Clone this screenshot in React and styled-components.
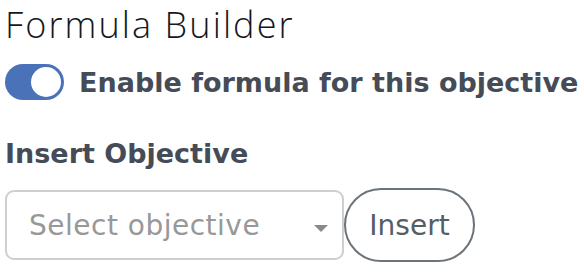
import React, { useState } from "react";
import styled, { createGlobalStyle } from "styled-components";

const GlobalStyle = createGlobalStyle`
  body {
    margin: 0;
    background: #fff;
    font-family: "DejaVu Sans", "Noto Sans", sans-serif;
  }
`;

const Panel = styled.div`
  padding: 0 5px;
  display: flex;
  flex-direction: column;
`;

const Title = styled.h2`
  margin: 0;
  font-family: "Open Sans", sans-serif;
  font-size: 36px;
  font-weight: 300;
  letter-spacing: 2.1px;
  color: #14171c;
  line-height: 49px;
  white-space: nowrap;
`;

const ToggleRow = styled.label`
  display: flex;
  align-items: center;
  gap: 15px;
  margin-top: 15px;
  cursor: pointer;
`;

const Track = styled.span`
  position: relative;
  width: 59px;
  height: 36px;
  border-radius: 18px;
  background: ${(p) => (p.$on ? "#4a72b9" : "#c4c8cf")};
  flex-shrink: 0;
`;

const Knob = styled.span`
  position: absolute;
  top: 3px;
  left: ${(p) => (p.$on ? "26px" : "3px")};
  width: 30px;
  height: 30px;
  border-radius: 50%;
  background: #fff;
`;

const ToggleText = styled.span`
  font-size: 27px;
  font-weight: 700;
  color: #454c57;
`;

const SectionLabel = styled.div`
  margin-top: 38px;
  font-size: 27px;
  font-weight: 700;
  color: #454c57;
`;

const Controls = styled.div`
  display: flex;
  align-items: center;
  margin-top: 19px;
`;

const SelectBox = styled.div`
  position: relative;
  box-sizing: border-box;
  width: 339px;
  height: 70px;
  border: 2px solid #cfcfcf;
  border-radius: 9px;
  display: flex;
  align-items: center;
  padding-left: 22px;
  font-size: 28px;
  letter-spacing: 0.5px;
  color: #989898;
`;

const Caret = styled.span`
  position: absolute;
  right: 14px;
  top: 33px;
  width: 0;
  height: 0;
  border-left: 7px solid transparent;
  border-right: 7px solid transparent;
  border-top: 7px solid #8a8a8a;
`;

const PillButton = styled.button`
  box-sizing: border-box;
  height: 74px;
  width: 131px;
  border: 2px solid #6b737b;
  border-radius: 37px;
  background: #fff;
  font-family: inherit;
  font-size: 28px;
  color: #555e67;
  cursor: pointer;
`;

export default function App() {
  const [on, setOn] = useState(true);
  return (
    <>
      <GlobalStyle />
      <Panel>
        <Title>Formula Builder</Title>
        <ToggleRow onClick={() => setOn(!on)}>
          <Track $on={on}>
            <Knob $on={on} />
          </Track>
          <ToggleText>Enable formula for this objective</ToggleText>
        </ToggleRow>
        <SectionLabel>Insert Objective</SectionLabel>
        <Controls>
          <SelectBox>
            Select objective
            <Caret />
          </SelectBox>
          <PillButton>Insert</PillButton>
        </Controls>
      </Panel>
    </>
  );
}
